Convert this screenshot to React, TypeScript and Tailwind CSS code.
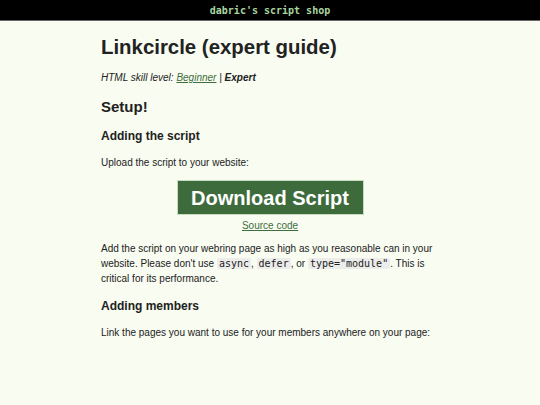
export default function App() {
  return (
    <div className="min-h-[405px] bg-[#f8fcf1] text-[#222] font-['Liberation_Sans',Arial,sans-serif]">
      {/* Top bar */}
      <header className="flex h-[21px] items-center justify-center border-b border-[#666] bg-black">
        <span className="font-['DejaVu_Sans_Mono',monospace] text-[10px] font-bold text-[#a9d6a0]">
          dabric's script shop
        </span>
      </header>

      <main className="mx-auto w-[338px] pt-[13px]">
        <h1 className="text-[20.4px] font-bold leading-[26px]">Linkcircle (expert guide)</h1>

        <p className="mt-[11px] text-[10px] italic leading-[14px]">
          HTML skill level:{" "}
          <a href="#" className="text-[#3e6e3e] underline">
            Beginner
          </a>{" "}
          | <b>Expert</b>
        </p>

        <h2 className="mt-[13px] text-[15px] font-bold leading-[18px]">Setup!</h2>

        <h3 className="mt-[12px] text-[12px] font-bold leading-[16px]">Adding the script</h3>

        <p className="mt-[12px] text-[10px] leading-[14px]">Upload the script to your website:</p>

        <div className="mt-[10px] flex flex-col items-center">
          <a
            href="#"
            className="flex h-[35px] w-[187px] items-center justify-center border border-[#c9dcc0] bg-[#3d6b3c] text-[20px] font-bold text-white"
          >
            Download Script
          </a>
          <a href="#" className="mt-[4px] text-[10px] leading-[14px] text-[#3e6e3e] underline">
            Source code
          </a>
        </div>

        <p className="mt-[8px] text-[10px] leading-[15px]">
          Add the script on your webring page as high as you reasonable can in your website. Please
          don't use <Code>async</Code>, <Code>defer</Code>, or <Code>type="module"</Code>. This is
          critical for its performance.
        </p>

        <h3 className="mt-[12px] text-[12px] font-bold leading-[16px]">Adding members</h3>

        <p className="mt-[12px] text-[10px] leading-[14px]">
          Link the pages you want to use for your members anywhere on your page:
        </p>
      </main>
    </div>
  );
}

function Code({ children }: { children: React.ReactNode }) {
  return (
    <code className="rounded-[2px] bg-[#ececea] px-[2px] font-['DejaVu_Sans_Mono',monospace] text-[10px] leading-[13px]">
      {children}
    </code>
  );
}
